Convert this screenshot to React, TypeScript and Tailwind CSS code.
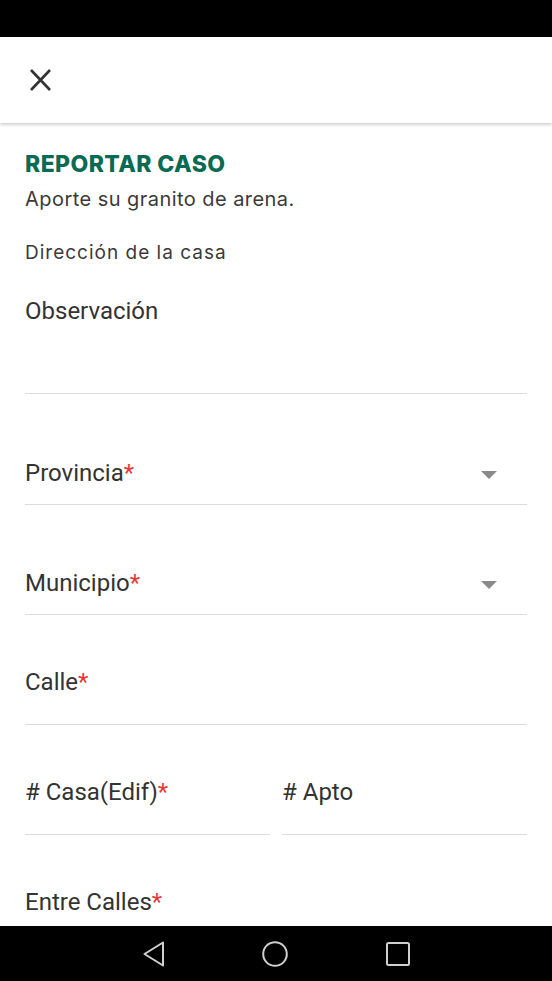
function Field({ label, required, dropdown, className = "" }: { label: string; required?: boolean; dropdown?: boolean; className?: string }) {
  return (
    <div className={`flex flex-col justify-end border-b border-[#dcdcdc] ${dropdown ? "pb-[17px]" : "pb-[28px]"} ${className}`}>
      <div className="flex items-center justify-between h-[28px]">
        <span className="text-[24px] leading-[28px] text-[#333]">
          {label}
          {required && <span className="text-[#e53935]">*</span>}
        </span>
        {dropdown && (
          <svg width="16" height="8" viewBox="0 0 16 8" className="mr-[30px] mt-[4px]">
            <path d="M0 0h16L8 8z" fill="#8a8a8a" />
          </svg>
        )}
      </div>
    </div>
  );
}

export default function App() {
  return (
    <div className="w-[552px] h-[981px] flex flex-col bg-white overflow-hidden font-['Roboto',sans-serif]">
      <div className="h-[37px] bg-black shrink-0" />
      <div className="h-[86px] shrink-0 flex items-center pl-[30px] bg-white shadow-[0_2px_3px_rgba(0,0,0,0.18)] relative z-10">
        <svg width="21" height="22" viewBox="0 0 21 22">
          <path d="M1 1l19 20M20 1L1 21" stroke="#333" strokeWidth="2.6" />
        </svg>
      </div>
      <div className="flex-1 px-[25px] pt-[27px] overflow-hidden">
        <h1 className="font-['Inter',sans-serif] font-extrabold text-[23px] leading-[28px] tracking-[0.4px] text-[#0b6a52]">REPORTAR CASO</h1>
        <p className="font-['Inter',sans-serif] text-[20px] leading-[24px] text-[#3a3a3a] mt-[9px] tracking-[0.45px]">Aporte su granito de arena.</p>
        <p className="font-['Inter',sans-serif] text-[19px] leading-[24px] text-[#3a3a3a] mt-[30px] tracking-[1px]">Dirección de la casa</p>
        <div className="mt-[32px] h-[97px] border-b border-[#dcdcdc]">
          <span className="block text-[24px] leading-[28px] text-[#333]">Observación</span>
        </div>
        <Field label="Provincia" required dropdown className="h-[111px]" />
        <Field label="Municipio" required dropdown className="h-[110px]" />
        <Field label="Calle" required className="h-[110px]" />
        <div className="flex gap-[12px]">
          <Field label="# Casa(Edif)" required className="flex-1 h-[110px]" />
          <Field label="# Apto" className="flex-1 h-[110px]" />
        </div>
        <Field label="Entre Calles" required className="h-[110px] shrink-0" />
      </div>
      <div className="h-[55px] bg-black shrink-0 flex items-center justify-center gap-[98px]">
        <svg width="21" height="26" viewBox="0 0 21 26">
          <path d="M20 1.5L1.5 13 20 24.5z" fill="none" stroke="#cfcfcf" strokeWidth="2" strokeLinejoin="round" />
        </svg>
        <svg width="26" height="26" viewBox="0 0 26 26">
          <circle cx="13" cy="13" r="11.8" fill="none" stroke="#cfcfcf" strokeWidth="2" />
        </svg>
        <svg width="24" height="24" viewBox="0 0 24 24">
          <rect x="1" y="1" width="22" height="22" rx="1.5" fill="none" stroke="#cfcfcf" strokeWidth="2" />
        </svg>
      </div>
    </div>
  );
}
